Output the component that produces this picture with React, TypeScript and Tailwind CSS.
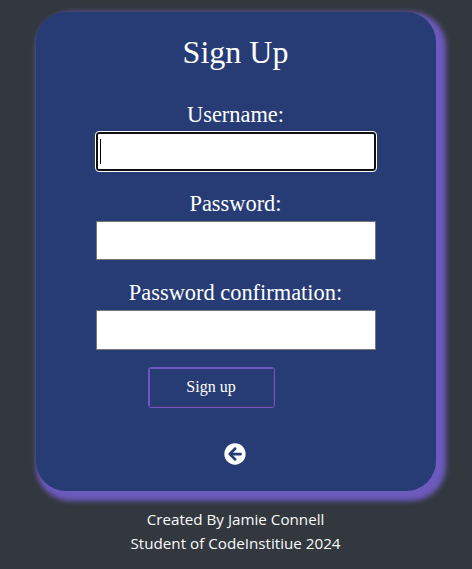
import { FaArrowCircleLeft } from "react-icons/fa";

function Field({ label, focused = false, className, inputClass }: { label: string; focused?: boolean; className: string; inputClass: string }) {
  return (
    <div className={`flex flex-col items-center ${className}`}>
      <label className="mr-px h-[26px] text-[22.4px] leading-[26px]">{label}</label>
      <div
        className={`flex w-[280px] items-center bg-white ${inputClass} ${
          focused ? "rounded-[3px] border-2 border-[#101010] outline outline-1 outline-white" : "border border-[#767676]"
        }`}
      >
        {focused && <span className="ml-[2px] h-[25px] w-px bg-black" />}
      </div>
    </div>
  );
}

export default function App() {
  return (
    <div className="flex h-[569px] w-[472px] flex-col items-center bg-[#33383f] pt-3">
      <main className="flex h-[479px] w-[400px] flex-col items-center rounded-[30px] bg-[#273c75] font-['Liberation_Serif',serif] text-white shadow-[5px_5px_5px_5px_#6c5abc]">
        <h1 className="mt-[21px] mr-px h-[38px] text-[32px] leading-[38px]">Sign Up</h1>
        <Field label="Username:" focused className="mt-[31px]" inputClass="mt-[4px] h-[39px]" />
        <Field label="Password:" className="mt-[20px]" inputClass="mt-[4px] h-[39px]" />
        <Field label="Password confirmation:" className="mt-[20px]" inputClass="mt-[4px] h-[40px]" />
        <button className="mt-[17px] mr-[49px] h-[41px] w-[127px] rounded-[3px] border border-[#6f56c0]">
          <span className="flex h-full w-full items-center justify-center rounded-[2px] border border-t-[#6f56c0] border-r-[#453872] border-b-[#453872] border-l-[#6f56c0] pr-px pb-0.5 text-base leading-5">
            Sign up
          </span>
        </button>
        <FaArrowCircleLeft className="mt-[35px] mr-0.5 size-[22px]" />
      </main>
      <footer className="mt-4 mr-px text-center font-['Open_Sans',sans-serif] text-[15.2px] leading-6 text-[#f8f9fa]">
        <p>Created By Jamie Connell</p>
        <p>Student of CodeInstitiue 2024</p>
      </footer>
    </div>
  );
}
